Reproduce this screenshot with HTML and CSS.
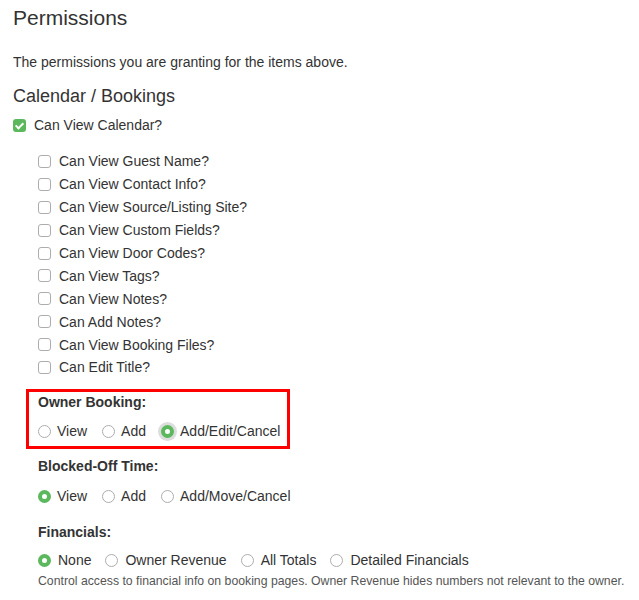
FILE: index.html
```html
<!DOCTYPE html>
<html lang="en">
<head>
  <meta charset="UTF-8">
  <title>Permissions</title>
  <link rel="stylesheet" href="styles.css">
</head>
<body>

  <h1 class="page-title">Permissions</h1>
  <p class="intro">The permissions you are granting for the items above.</p>

  <h2 class="section-title">Calendar / Bookings</h2>

  <label class="check-row">
    <span class="box checked"></span>
    <span>Can View Calendar?</span>
  </label>

  <div class="sub-options">
    <label class="check-row"><span class="box"></span><span>Can View Guest Name?</span></label>
    <label class="check-row"><span class="box"></span><span>Can View Contact Info?</span></label>
    <label class="check-row"><span class="box"></span><span>Can View Source/Listing Site?</span></label>
    <label class="check-row"><span class="box"></span><span>Can View Custom Fields?</span></label>
    <label class="check-row"><span class="box"></span><span>Can View Door Codes?</span></label>
    <label class="check-row"><span class="box"></span><span>Can View Tags?</span></label>
    <label class="check-row"><span class="box"></span><span>Can View Notes?</span></label>
    <label class="check-row"><span class="box"></span><span>Can Add Notes?</span></label>
    <label class="check-row"><span class="box"></span><span>Can View Booking Files?</span></label>
    <label class="check-row"><span class="box"></span><span>Can Edit Title?</span></label>
  </div>

  <!-- owner booking block, outlined -->
  <div class="group highlight">
    <div class="group-label">Owner Booking:</div>
    <div class="radio-row">
      <label class="radio"><span class="dot"></span>View</label>
      <label class="radio"><span class="dot"></span>Add</label>
      <label class="radio"><span class="dot on focused"></span>Add/Edit/Cancel</label>
    </div>
  </div>

  <div class="group blocked">
    <div class="group-label">Blocked-Off Time:</div>
    <div class="radio-row">
      <label class="radio"><span class="dot on"></span>View</label>
      <label class="radio"><span class="dot"></span>Add</label>
      <label class="radio"><span class="dot"></span>Add/Move/Cancel</label>
    </div>
  </div>

  <div class="group financials">
    <div class="group-label">Financials:</div>
    <div class="radio-row">
      <label class="radio"><span class="dot on"></span>None</label>
      <label class="radio"><span class="dot"></span>Owner Revenue</label>
      <label class="radio"><span class="dot"></span>All Totals</label>
      <label class="radio"><span class="dot"></span>Detailed Financials</label>
    </div>
    <div class="help">Control access to financial info on booking pages. Owner Revenue hides numbers not relevant to the owner.</div>
  </div>

</body>
</html>
```

FILE: styles.css
```css
body {
  font-family: 'Liberation Sans', Arial, sans-serif;
  font-size: 14px;
  color: #333;
  background-color: #fff;
  margin: 0;
  padding: 0 13px;
}

.page-title {
  font-size: 21px;
  font-weight: normal;
  line-height: 24px;
  margin: 6px 0 0;
}

.intro {
  line-height: 20px;
  margin: 22px 0 0;
}

.section-title {
  font-size: 18px;
  font-weight: normal;
  line-height: 22px;
  margin: 13px 0 0;
}

.check-row {
  display: flex;
  align-items: center;
  gap: 8px;
  height: 20px;
  margin-top: 8px;
}

.sub-options {
  padding-left: 25px;
  margin-top: 15px;
}

.sub-options .check-row {
  height: 22.9px;
  margin-top: 0;
}

.box {
  width: 11px;
  height: 11px;
  border: 1px solid #adadad;
  border-radius: 3px;
  background-color: #fff;
  flex-shrink: 0;
  position: relative;
}

.box.checked {
  width: 13px;
  height: 13px;
  border: none;
  background-color: #5cb85c;
}

/* white tick inside the green box */
.box.checked::after {
  content: "";
  position: absolute;
  left: 4px;
  top: 2px;
  width: 3px;
  height: 6px;
  border: solid #fff;
  border-width: 0 2px 2px 0;
  transform: rotate(45deg);
}

.group {
  padding-left: 25px;
}

.group-label {
  font-weight: bold;
  line-height: 20px;
}

.radio-row {
  display: flex;
  align-items: center;
  height: 20px;
  margin-top: 8px;
}

.radio {
  display: flex;
  align-items: center;
  gap: 6px;
  margin-right: 15px;
}

.dot {
  width: 11px;
  height: 11px;
  border: 1px solid #adadad;
  border-radius: 50%;
  background-color: #fff;
  flex-shrink: 0;
}

.dot.on {
  width: 5px;
  height: 5px;
  border: 4px solid #5cb85c;
}

.dot.focused {
  box-shadow: 0 0 0 3px #ddd;
}

.highlight {
  width: 249px;
  border: 3px solid #f00;
  margin: 10.5px 0 0 13px;
  padding: 0 0 5px 9px;
}

.highlight .radio-row {
  margin-top: 9px;
}

.blocked {
  margin-top: 7px;
}

.blocked .radio-row {
  margin-top: 10px;
}

.financials {
  margin-top: 16px;
}

.financials .radio {
  gap: 7px;
  margin-right: 14px;
}

.help {
  font-size: 12.25px;
  line-height: 16px;
  color: #555;
  margin-top: 3px;
  white-space: nowrap;
}
```
